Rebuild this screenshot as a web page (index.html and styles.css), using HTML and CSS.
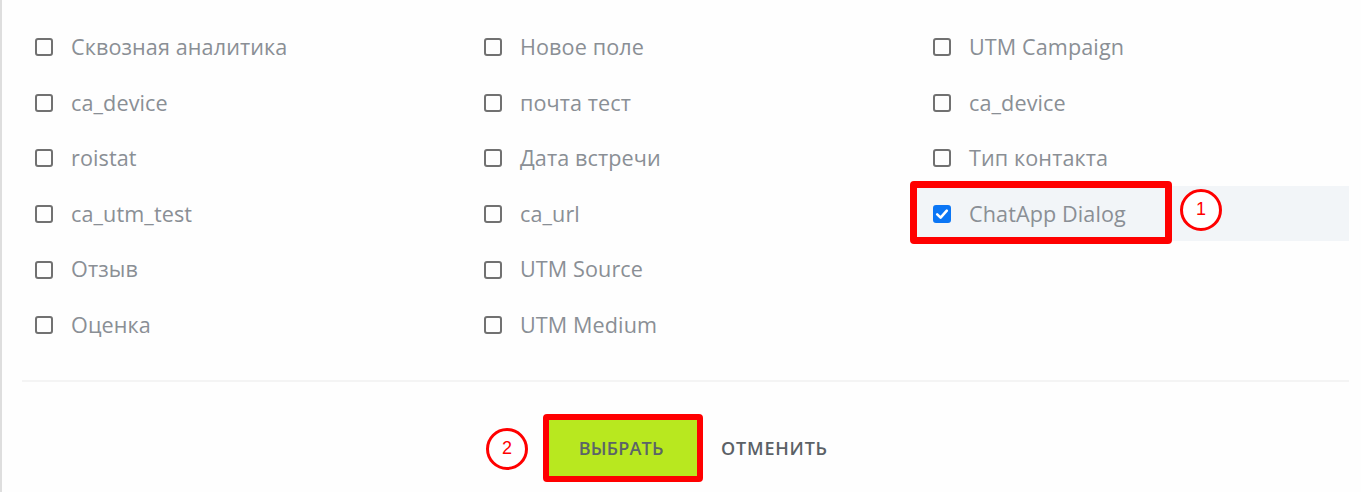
FILE: index.html
```html
<!DOCTYPE html>
<html lang="ru">
<head>
<meta charset="utf-8">
<title>Поля</title>
<link rel="stylesheet" href="styles.css">
</head>
<body>
<div class="panel">
  <div class="content">
    <div class="grid">
      <div class="col">
        <label class="item"><span class="box"></span><span class="label">Сквозная аналитика</span></label>
        <label class="item"><span class="box"></span><span class="label">ca_device</span></label>
        <label class="item"><span class="box"></span><span class="label">roistat</span></label>
        <label class="item"><span class="box"></span><span class="label">ca_utm_test</span></label>
        <label class="item"><span class="box"></span><span class="label">Отзыв</span></label>
        <label class="item"><span class="box"></span><span class="label">Оценка</span></label>
      </div>
      <div class="col">
        <label class="item"><span class="box"></span><span class="label">Новое поле</span></label>
        <label class="item"><span class="box"></span><span class="label">почта тест</span></label>
        <label class="item"><span class="box"></span><span class="label">Дата встречи</span></label>
        <label class="item"><span class="box"></span><span class="label">ca_url</span></label>
        <label class="item"><span class="box"></span><span class="label">UTM Source</span></label>
        <label class="item"><span class="box"></span><span class="label">UTM Medium</span></label>
      </div>
      <div class="col">
        <label class="item"><span class="box"></span><span class="label">UTM Campaign</span></label>
        <label class="item"><span class="box"></span><span class="label">ca_device</span></label>
        <label class="item"><span class="box"></span><span class="label">Тип контакта</span></label>
        <label class="item item-active">
          <span class="box box-checked"><svg viewBox="0 0 18 18" width="18" height="18"><path d="M4.2 9.4 L7.6 12.6 L13.8 5.6" fill="none" stroke="#fff" stroke-width="2.6" stroke-linecap="round" stroke-linejoin="round"/></svg></span>
          <span class="label">ChatApp Dialog</span>
          <span class="mark-box"></span>
          <span class="mark-circle mark-circle-1">1</span>
        </label>
      </div>
    </div>
    <div class="divider"></div>
    <div class="footer">
      <div class="select-wrap">
        <span class="mark-circle mark-circle-2">2</span>
        <button class="btn-select">ВЫБРАТЬ</button>
      </div>
      <button class="btn-cancel">ОТМЕНИТЬ</button>
    </div>
  </div>
</div>
</body>
</html>
```

FILE: styles.css
```css
html, body {
  margin: 0;
  padding: 0;
  background: #ffffff;
}

body {
  font-family: "Open Sans", "Liberation Sans", sans-serif;
  width: 1361px;
  height: 492px;
  overflow: hidden;
}

.panel {
  height: 492px;
  border-left: 2px solid #dedede;
  background: #fefefe;
  box-sizing: border-box;
  padding-left: 20px;
}

.content {
  width: 1327px;
}

.grid {
  display: grid;
  grid-template-columns: 449px 449px 1fr;
  padding-top: 19px;
}

.col {
  display: flex;
  flex-direction: column;
}

.item {
  position: relative;
  height: 55.6px;
  display: flex;
  align-items: center;
  padding-left: 13px;
  box-sizing: border-box;
}

.item-active {
  background: #f2f5f8;
  margin-left: -9px;
  padding-left: 22px;
}

.box {
  width: 18px;
  height: 18px;
  box-sizing: border-box;
  border: 2px solid #717171;
  border-radius: 3px;
  flex: 0 0 auto;
  margin-right: 18px;
  margin-top: 1px;
  display: flex;
}

.box-checked {
  background: #0b76f5;
  border-color: #0b76f5;
}

.box-checked svg {
  margin: -2px;
}

.label {
  font-size: 21.6px;
  color: #8a8f95;
  white-space: nowrap;
  line-height: 1;
  letter-spacing: 0.1px;
}

.mark-box {
  position: absolute;
  left: -1px;
  top: -5px;
  width: 262px;
  height: 63px;
  box-sizing: border-box;
  border: 7px solid #ff0000;
  border-radius: 4px;
}

.mark-circle {
  position: absolute;
  width: 42px;
  height: 42px;
  box-sizing: border-box;
  border: 3px solid #ff0000;
  border-radius: 50%;
  background: #ffffff;
  color: #ff0000;
  font-family: "Liberation Sans", Arial, sans-serif;
  font-size: 18px;
  display: flex;
  align-items: center;
  justify-content: center;
}

.mark-circle-1 {
  left: 269px;
  top: 3px;
}

.divider {
  height: 2px;
  background: #f4f4f4;
  margin-top: 27px;
}

.footer {
  display: flex;
  justify-content: center;
  align-items: center;
  padding-top: 32px;
}

.select-wrap {
  position: relative;
}

.mark-circle-2 {
  left: -57px;
  top: 14px;
}

.btn-select {
  display: block;
  width: 160px;
  height: 68px;
  box-sizing: border-box;
  border: 6px solid #ff0000;
  border-radius: 4px;
  background: #b8e81f;
  color: #5b6468;
  font-family: "Open Sans", "Liberation Sans", sans-serif;
  font-weight: 600;
  font-size: 18px;
  letter-spacing: 0.2px;
  padding: 0;
  text-indent: -4px;
}

.btn-cancel {
  margin-left: 18px;
  border: none;
  background: transparent;
  padding: 0;
  color: #5b6166;
  font-family: "Open Sans", "Liberation Sans", sans-serif;
  font-weight: 600;
  font-size: 18px;
  letter-spacing: 0.8px;
}
```
